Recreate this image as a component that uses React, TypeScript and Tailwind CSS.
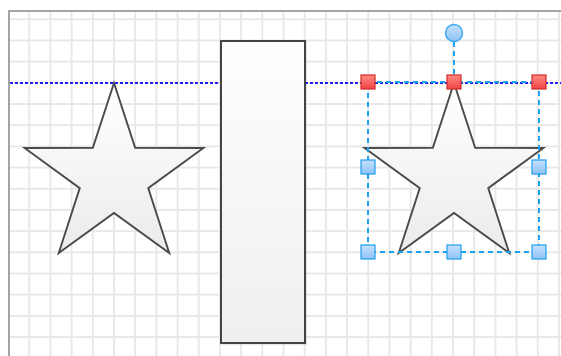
import React from "react";

// star points in page coordinates, centre (cx, 177), R = 94, r = 36
function starPoints(cx: number, cy = 177, R = 94, r = 36) {
  const pts: string[] = [];
  for (let i = 0; i < 10; i++) {
    const a = ((-90 + i * 36) * Math.PI) / 180;
    const rad = i % 2 === 0 ? R : r;
    pts.push(`${(cx + rad * Math.cos(a)).toFixed(2)},${(cy + rad * Math.sin(a)).toFixed(2)}`);
  }
  return pts.join(" ");
}

const BLUE_HANDLES = [
  [368, 167],
  [539, 167],
  [368, 252],
  [454, 252],
  [539, 252],
];
const RED_HANDLES = [
  [368, 82],
  [454, 82],
  [539, 82],
];

export default function App() {
  return (
    <div className="w-[561px] h-[356px] bg-white pl-[8px] pt-[10px] flex overflow-hidden">
      <div className="relative flex-1 border-l-2 border-t-2 border-[#a4a4a4] overflow-hidden bg-white bg-[linear-gradient(to_right,#e8e8e8_0_2px,transparent_2px),linear-gradient(to_bottom,#e8e8e8_0_2px,transparent_2px)] bg-size-[21.2px_21.2px] bg-position-[18.3px_6.3px]">
        {/* guide line */}
        <div className="absolute left-0 right-0 top-[69.5px] h-[2px] bg-[repeating-linear-gradient(to_right,#1f1ff0_0_3px,transparent_3px_5px)]" />

        {/* rectangle node */}
        <div className="absolute left-[210px] top-[28px] w-[86px] h-[304px] border-2 border-[#444] bg-[linear-gradient(to_bottom,#fefefe,#efefef)] shadow-[1px_1px_1px_rgba(0,0,0,0.08)]" />

        <svg
          className="absolute inset-0"
          width={551}
          height={344}
          viewBox="10 12 551 344"
        >
          <defs>
            <linearGradient id="starFill" x1="0" y1="0" x2="0" y2="1">
              <stop offset="0" stopColor="#ffffff" />
              <stop offset="1" stopColor="#ebebeb" />
            </linearGradient>
            <linearGradient id="redFill" x1="0" y1="0" x2="0" y2="1">
              <stop offset="0" stopColor="#ff8a84" />
              <stop offset="1" stopColor="#f04444" />
            </linearGradient>
            <linearGradient id="blueFill" x1="0" y1="0" x2="0" y2="1">
              <stop offset="0" stopColor="#c4e1fc" />
              <stop offset="1" stopColor="#8fc3f5" />
            </linearGradient>
          </defs>

          <polygon points={starPoints(114)} fill="url(#starFill)" stroke="#4a4a4a" strokeWidth={1.9} strokeLinejoin="miter" />
          <polygon points={starPoints(454)} fill="url(#starFill)" stroke="#4a4a4a" strokeWidth={1.9} strokeLinejoin="miter" />

          {/* selection */}
          <g stroke="#1ea3f3" strokeWidth={2} strokeDasharray="5 4" fill="none">
            <rect x={368} y={82} width={171} height={170} />
            <line x1={454} y1={42} x2={454} y2={82} />
          </g>
          <circle cx={454} cy={33} r={8.5} fill="url(#blueFill)" stroke="#3fa9f0" strokeWidth={1.5} />
          {RED_HANDLES.map(([x, y]) => (
            <rect key={`r${x}`} x={x - 7} y={y - 7} width={14} height={14} fill="url(#redFill)" stroke="#d22a2a" strokeWidth={1.2} />
          ))}
          {BLUE_HANDLES.map(([x, y]) => (
            <rect key={`b${x}-${y}`} x={x - 7} y={y - 7} width={14} height={14} fill="url(#blueFill)" stroke="#1f9ef0" strokeWidth={1.2} />
          ))}
        </svg>
      </div>
    </div>
  );
}
